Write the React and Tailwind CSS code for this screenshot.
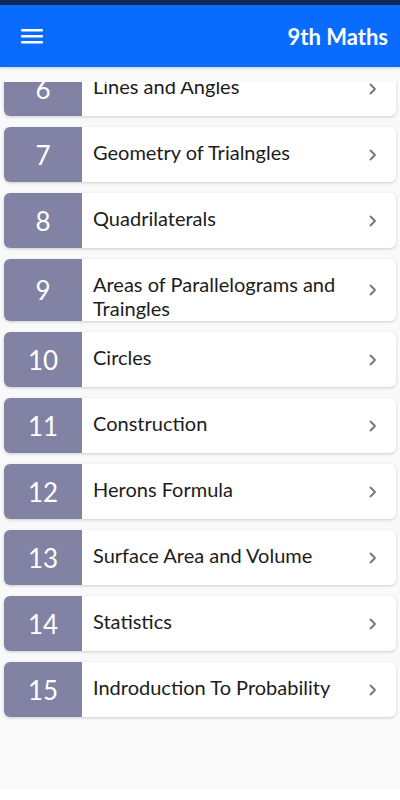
import React from 'react';

const chapters = [
    { n: 6, title: 'Lines and Angles' },
    { n: 7, title: 'Geometry of Trialngles' },
    { n: 8, title: 'Quadrilaterals' },
    { n: 9, title: 'Areas of Parallelograms and Traingles', tall: true },
    { n: 10, title: 'Circles' },
    { n: 11, title: 'Construction' },
    { n: 12, title: 'Herons Formula' },
    { n: 13, title: 'Surface Area and Volume' },
    { n: 14, title: 'Statistics' },
    { n: 15, title: 'Indroduction To Probability' },
];

const Chevron = () => (
    <svg width="10" height="14" viewBox="0 0 10 14" fill="none">
        <path d="M2.5 2.5 L7 7 L2.5 11.5" stroke="#757575" strokeWidth="1.8" strokeLinecap="round" strokeLinejoin="round" />
    </svg>
);

const ChapterCard = ({ n, title, tall }) => (
    <div className={`flex items-stretch bg-white rounded-[6px] overflow-hidden shadow-[0_1px_3px_rgba(0,0,0,0.18)] ${tall ? 'h-[62px]' : 'h-[55px]'}`}>
        <div className="w-[78px] shrink-0 bg-[#8282a4] flex items-center justify-center text-white text-[26px] leading-none">
            {n}
        </div>
        <div className="flex-1 flex items-center pl-[11px] pr-[18px]">
            <div className="flex-1 self-stretch pt-[13px] overflow-hidden">
                <span className="block text-[20px] leading-[24px] text-[#1c1c1c]">{title}</span>
            </div>
            <Chevron />
        </div>
    </div>
);

export default function App() {
    return (
        <div className="w-[400px] h-[800px] flex flex-col bg-white font-['Lato','Noto_Sans',sans-serif]">
            <div className="h-[5px] bg-[#0f2a5a]" />
            <header className="h-[62px] bg-[#0a6cfe] flex items-center justify-between pl-[21px] pr-[12px] shadow-[0_1px_3px_rgba(0,0,0,0.2)] z-10">
                <svg width="22" height="16" viewBox="0 0 22 16">
                    <rect x="0" y="1" width="22" height="2.4" rx="1" fill="white" />
                    <rect x="0" y="7" width="22" height="2.4" rx="1" fill="white" />
                    <rect x="0" y="13" width="22" height="2.4" rx="1" fill="white" />
                </svg>
                <h1 className="text-white text-[22px] font-bold">9th Maths</h1>
            </header>
            <main className="h-[722px] bg-[#f9f9f9] pt-[15px] flex flex-col">
                <div className="flex-1 overflow-hidden">
                    <div className="-mt-[21px] flex flex-col gap-[11px] px-[4px] pb-[4px]">
                        {chapters.map((c) => (
                            <ChapterCard key={c.n} n={c.n} title={c.title} tall={c.tall} />
                        ))}
                    </div>
                </div>
            </main>
        </div>
    );
}
